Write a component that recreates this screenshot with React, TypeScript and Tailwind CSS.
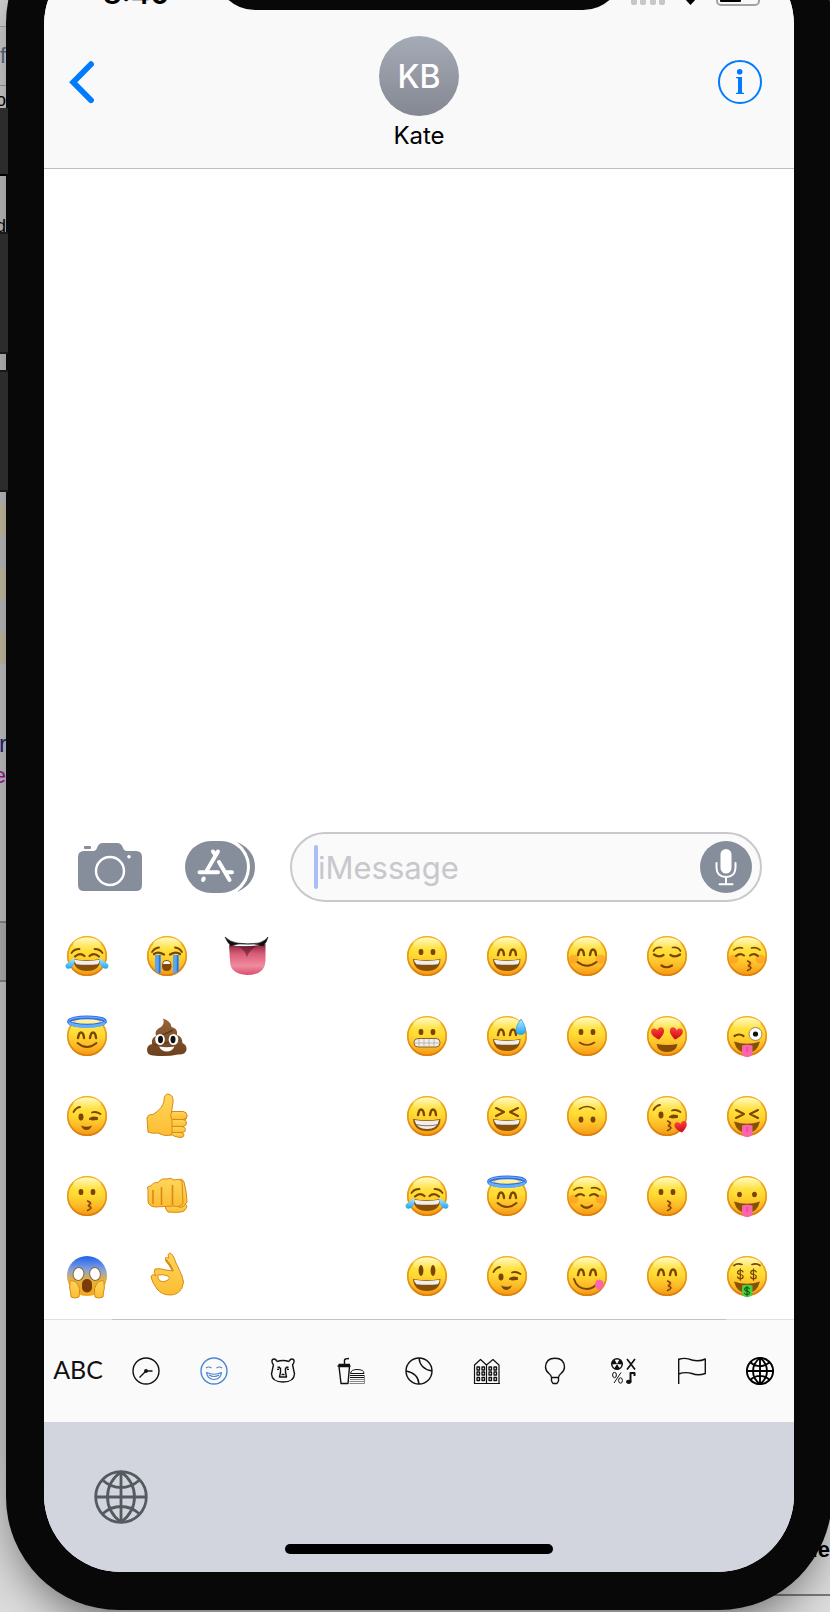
import type { ReactNode } from "react";

const BROWN = "#7a4504";

/* ---------- Emoji parts, all on a 40 x 40 grid ---------- */

function Line({ d, w = 1.9 }: { d: string; w?: number }) {
  return <path d={d} fill="none" stroke={BROWN} strokeWidth={w} strokeLinecap="round" strokeLinejoin="round" />;
}

function Ball({ fill = "url(#skin)" }: { fill?: string }) {
  return (
    <>
      <circle cx="20" cy="20" r="20" fill={fill} />
      <circle cx="20" cy="20" r="19.2" fill="none" stroke="url(#rim)" strokeWidth="1.6" />
      <ellipse cx="20" cy="8" rx="14" ry="6.5" fill="url(#shine)" />
    </>
  );
}

function OvalEyes({ y = 16, ry = 3.1, dx = 6 }: { y?: number; ry?: number; dx?: number }) {
  return (
    <>
      <ellipse cx={20 - dx} cy={y} rx="2.4" ry={ry} fill={BROWN} />
      <ellipse cx={20 + dx} cy={y} rx="2.4" ry={ry} fill={BROWN} />
    </>
  );
}

const ArchEyes = () => <Line w={2.4} d="M11 19Q12 13.5 14 13.5Q16.500 13.500 17 19M23 19Q24 13.500 26 13.500Q28.500 13.500 29 19" />;
const SquintEyes = () => <Line w={2} d="M9 12L17 16L9 20M31 12L23 16L31 20" />;
const ClosedEyes = () => <Line w={2.1} d="M9 20Q13 16.500 17 19.500M23 19.500Q27 16.500 31 20" />;
const Brows = () => <Line w={1.7} d="M7 14Q10.500 10.500 15.500 12M24.500 12Q29.500 10.500 33 14" />;
const Wink = () => (
  <>
    <Line w={1.8} d="M6.500 16Q9 11.500 13 11M25 16.500Q29 15 33.500 18" />
    <ellipse cx="14" cy="21" rx="2.5" ry="3.4" fill={BROWN} />
    <Line w={2.1} d="M23 23Q25.500 20.500 30 22M25 23.500L30 23" />
  </>
);
const Kiss = () => (
  <>
    <path d="M21 26L26 27L24 30L26 33L21 34Z" fill="#f5891c" opacity="0.6" />
    <Line w={1.5} d="M20.500 25Q25.500 26.500 22 29Q20.500 30 22 30Q26.500 32 20.500 34.500" />
  </>
);
const BigMouth = ({ grid = false }: { grid?: boolean }) => (
  <>
    <path d="M6 23Q20 25.500 33.500 23Q33 35 20 35Q7 35 6 23Z" fill="#885006" />
    <path
      d={grid ? "M7.500 24Q20 26 32 24Q30.500 33 20 33Q9.500 33 7.500 24Z" : "M7 23.800Q20 26 32.500 23.800Q32.500 27.500 30.500 28.200Q20 29.500 9.500 28.200Q7.500 27 7 23.800Z"}
      fill="#f0eff0"
    />
    {grid && <path d="M9 28.500Q20 31 31 28.500" fill="none" stroke="#977452" strokeWidth="1.2" />}
  </>
);
const Tongue = ({ fill = "#fb65ae", line = "#e43b83" }: { fill?: string; line?: string }) => (
  <>
    <path d="M7 25.500Q20 30 33 25.500Q30 37 20 37Q10 37 7 25.500Z" fill="#885006" />
    <path d="M15 29.500Q20 28 25.500 29.500V36Q25.500 41.200 20 41.200Q15 41.200 15 36Z" fill={fill} />
    <path d="M20 31V36" stroke={line} strokeWidth="1" />
  </>
);
const Cheeks = () => (
  <>
    <ellipse cx="6.500" cy="23" rx="5" ry="4.500" fill="#ff6d1d" opacity="0.35" />
    <ellipse cx="33.500" cy="23" rx="5" ry="4.500" fill="#ff6d1d" opacity="0.35" />
  </>
);
const Heart = ({ x, y, s, r = 0 }: { x: number; y: number; s: number; r?: number }) => (
  <path
    transform={`translate(${x} ${y}) rotate(${r}) scale(${s})`}
    d="M0 6C-3 4-7 0.500-6.500-3C-6-6.500-1.500-6.500 0-3C1.500-6.500 6-6.500 6.500-3C7 0.500 3 4 0 6Z"
    fill="url(#red)"
  />
);
const Dollar = ({ x, y, s = 1, color = BROWN }: { x: number; y: number; s?: number; color?: string }) => (
  <path
    transform={`translate(${x} ${y}) scale(${s})`}
    d="M2.800-2.500Q2.300-4.200 0-4.200Q-2.800-4.200-2.800-2Q-2.800-0.500 0 0Q2.800 0.500 2.800 2.200Q2.800 4.200 0 4.200Q-2.500 4.200-2.800 2.300M0-5.700V5.700"
    fill="none"
    stroke={color}
    strokeWidth="1.200"
    strokeLinecap="round"
  />
);
const Hand = ({ children }: { children: ReactNode }) => (
  <g fill="url(#hand)" stroke="#d98a14" strokeWidth="1" strokeLinejoin="round">
    {children}
  </g>
);

const EMOJI: Record<string, ReactNode> = {
  joy: (
    <>
      <Ball />
      <Line w={1.800} d="M4.500 17Q7 13 12.500 13M27.500 13Q33 13 35.500 17" />
      <Line w={2.200} d="M8 20.500Q13 16 17.500 20M22.500 20Q27 16 32 20.500" />
      <BigMouth />
      <path d="M7.500 21.500Q8.500 29 4 32Q-0.500 34-1.500 30.500C-2 27 3 26 7.500 21.500Z" fill="url(#tear)" />
      <path d="M32.500 21.500Q31.500 29 36 32Q40.500 34 41.500 30.500C42 27 37 26 32.500 21.500Z" fill="url(#tear)" />
    </>
  ),
  halo: (
    <>
      <Ball />
      <ellipse cx="20" cy="5.500" rx="18" ry="4.200" fill="none" stroke="#2e6fe9" strokeWidth="3.800" />
      <ellipse cx="20" cy="5.200" rx="18.500" ry="4.200" fill="none" stroke="#7fb4fa" strokeWidth="1" />
      <path d="M2 6.500Q5 10.500 20 10.500T38 6.500" fill="none" stroke="#5eb0ff" strokeWidth="2.600" />
      <g transform="translate(0 3)">
        <ArchEyes />
      </g>
      <Line d="M10.500 27Q20 35 29.500 27" />
    </>
  ),
  wink: (
    <>
      <Ball />
      <Wink />
      <path d="M14 29.500Q19.500 32 25 29.500Q23 34 19.500 34Q16 34 14 29.500Z" fill={BROWN} />
    </>
  ),
  kissing: (
    <>
      <Ball />
      <OvalEyes />
      <Kiss />
    </>
  ),
  scream: (
    <>
      <circle cx="20" cy="20" r="20" fill="url(#fright)" />
      <g fill="#fff" stroke="#896a32" strokeWidth="1">
        <ellipse cx="11.500" cy="18" rx="5.300" ry="6.500" transform="rotate(12 11.500 18)" />
        <ellipse cx="28" cy="18" rx="5.300" ry="6.500" transform="rotate(-12 28 18)" />
      </g>
      <rect x="15" y="23" width="10" height="13.500" rx="5" fill="#7b3b06" />
      <Hand>
        <path d="M3 28Q2 24.500 5 24.500Q9 25 11 29Q13 32 12.500 36L12 41Q8 43 4 41L3.500 36Q2 32 3 28Z" />
        <path d="M37 28Q38 24.500 35 24.500Q31 25 29 29Q27 32 27.500 36L28 41Q32 43 36 41L36.500 36Q38 32 37 28Z" />
      </Hand>
    </>
  ),
  sob: (
    <>
      <Ball />
      <Line w={1.800} d="M5 16Q7.500 12 12 11.500M28 11.500Q32.500 12 35 16" />
      <path d="M8 19H14V38Q10 36.500 8 35ZM26 19H32V35Q30 36.500 26 38Z" fill="#5ba4ee" />
      <path d="M12.500 19V37M30.500 19V36" stroke="#2b70d6" strokeWidth="1.400" />
      <Line w={2.300} d="M7 18Q11 15 17 18.500M23 18.500Q29 15 33 18" />
      <path d="M15 30Q15 24 19.500 24Q24.500 24 24.500 30Q24.500 35 19.500 35Q15 35 15 30Z" fill="#854804" />
      <path d="M16 28Q16.500 25 19.500 25Q23 25 23.500 28Z" fill="#fff" />
    </>
  ),
  poop: (
    <>
      <path
        d="M16 2.500Q24 5 24.500 11Q31 12 30 19Q35 20 35.500 27Q40 29 39.500 34Q38 39 31 38.500Q20 41 6 39.500Q0 39 0 34Q0 29 5 28Q4 22 9 20Q7 14 14 11Q18 8 16 2.500Z"
        fill="url(#brown)"
      />
      <path d="M11 21Q18 18 26 14M7 29Q20 27 33 24" fill="none" stroke="#563215" strokeWidth="1.200" />
      <ellipse cx="13" cy="23.500" rx="4.800" ry="5.600" fill="#fff" />
      <ellipse cx="26.500" cy="23.500" rx="4.800" ry="5.600" fill="#fff" />
      <ellipse cx="13.500" cy="23.500" rx="2.500" ry="3.700" fill="#111" />
      <ellipse cx="26" cy="23.500" rx="2.500" ry="3.700" fill="#111" />
      <path d="M12 30.500Q20 32 27.500 30.500Q25 35.500 20 35.500Q14.500 35.500 12 30.500Z" fill="#fff" />
    </>
  ),
  thumb: (
    <Hand>
      <path d="M0 22Q1 18 6 18.500Q16 12 17 5Q17-2 21-2Q27-1 26 7Q25 12 24.500 16H35Q40 17 40 20Q40 24 36 24.500L25 39Q17 41 11 37Q5 38 1 36Z" />
      <path d="M25 15.500H36Q40 16 40 19.500Q40 23 36 23.500H25Q22 20 25 15.500Z" />
      <path d="M25 23.500H36Q39.500 24 39.500 27Q39.500 30 36 30.500H25Z" />
      <path d="M25 30.500H35Q38.500 31 38.500 33.500Q38.500 36.500 35 36.500H25Z" />
      <path d="M25 36.500H34Q37 37 37 39Q37 41.500 33 41.500Q27 41 24 38Z" />
    </Hand>
  ),
  fist: (
    <Hand>
      <path d="M18 28H38Q42 30 37 35Q34 37 21 36Q18 34 18 28Z" />
      <path d="M30 5Q35 1 37 6Q40 17 40 26Q36 34 30 30Z" />
      <path d="M1 14Q-1 10 4 10Q6 6 11 6.500Q14 2 20 3Q24 1 27 4Q32 2 35 5L36 27Q33 32 27 30L8 31Q1 30 1 25Z" />
      <path d="M6 14V28M14.500 11V29M25.500 9V29" fill="none" strokeWidth="1.600" />
    </Hand>
  ),
  ok: (
    <Hand>
      <path
        fillRule="evenodd"
        d="M22 2Q20-2 23-3Q26-2 29 7Q33 15 35 20Q38 26 35 32Q31 39 23 39Q15 39 10 33Q5 26 4 21Q5 17 9 20Q6 17 8 13Q13 12 19 14L26 15Q23 9 19 5Q17 0 21 2ZM11 19Q16 18 21 20Q24 22 21 24Q17 27 13 25Q10 22 11 19Z"
      />
      <path d="M19 4Q24 10 26 15" fill="none" strokeWidth="2" />
    </Hand>
  ),
  lips: (
    <>
      <path d="M2 9Q20 12 38.500 8L38.500 25Q38 39 20 39Q3 38 3 25Z" fill="url(#tongue)" />
      <path d="M10 10Q18 13 20 21Q23 13 31 10Z" fill="#3d0916" opacity="0.450" />
      <path d="M-2 1Q3 6 10 7Q21 9 32 7Q38 5 41 1Q40 6 36 10Q27 7 20 8Q11 7 4 10Q0 6-2 1Z" fill="#111" stroke="#111" strokeWidth="0.600" />
    </>
  ),
  grinning: (<><Ball /><OvalEyes /><BigMouth /></>),
  grimace: (
    <>
      <Ball />
      <OvalEyes />
      <rect x="7" y="22.500" width="26" height="8.500" rx="4" fill="#efefef" stroke="#8c651f" />
      <path d="M8 27H32M12 23V31M17 23V31M22 23V31M27 23V31" stroke="#b4aca0" strokeWidth="0.800" />
    </>
  ),
  beam: (<><Ball /><ArchEyes /><BigMouth grid /></>),
  smiley: (<><Ball /><OvalEyes y={14.500} ry={5.400} /><BigMouth /></>),
  smile: (<><Ball /><ArchEyes /><BigMouth /></>),
  sweat: (
    <>
      <Ball />
      <ArchEyes />
      <BigMouth />
      <path d="M34 3Q38.500 10 38.500 14Q38 18.500 34 18.500Q29 18.500 29 14Q29 10 34 3Z" fill="url(#tear)" stroke="#1c9be8" strokeWidth="0.700" />
    </>
  ),
  laughing: (<><Ball /><SquintEyes /><BigMouth /></>),
  blush: (<><Ball /><Cheeks /><ArchEyes /><Line d="M10.500 26Q20 33.500 29.500 26" /></>),
  slight: (<><Ball /><OvalEyes /><Line w={1.600} d="M12.500 26.500Q20 31.500 27.500 26.500" /></>),
  upside: (
    <>
      <Ball />
      <OvalEyes y={23.500} />
      <Line w={1.600} d="M12.500 13Q20 8 27.500 13" />
    </>
  ),
  relaxed: (
    <>
      <Ball />
      <Cheeks />
      <Brows />
      <ClosedEyes />
      <Line d="M14.500 29.500Q19.500 34 25 29.500" w={2.200} />
    </>
  ),
  yum: (
    <>
      <Ball />
      <ArchEyes />
      <Line d="M7 23Q10 33 20 33Q27 33 31 26" />
      <path d="M29 25Q32 22 35.500 25Q38 28 35.500 32Q32 35 29 32Q27 30 29 25Z" fill="#fb65ae" />
    </>
  ),
  relieved: (
    <>
      <Ball />
      <Line w={1.700} d="M6.500 15Q9 10.500 14.500 11.500M25.500 11.500Q31 10.500 33.500 15" />
      <Line w={2.300} d="M7 18.500Q11.500 22 16.500 19M23.500 19Q28.500 22 33 18.500" />
      <Line w={2.200} d="M14.500 29.500Q19.500 33 25 29.500" />
    </>
  ),
  hearts: (
    <>
      <Ball />
      <Heart x={11} y={17.500} s={1} r={-10} />
      <Heart x={29} y={17.500} s={1} r={10} />
      <path d="M9.500 28Q20 30 30.500 28Q29 36 20 36Q11 36 9.500 28Z" fill="#854b07" />
    </>
  ),
  kissheart: (
    <>
      <Ball />
      <g transform="translate(0 -2)">
        <Wink />
      </g>
      <Kiss />
      <Heart x={34} y={31} s={0.950} r={-10} />
    </>
  ),
  kisssmile: (<><Ball /><ArchEyes /><Kiss /></>),
  kissclosed: (<><Ball /><Cheeks /><Brows /><ClosedEyes /><Kiss /></>),
  winktongue: (
    <>
      <Ball />
      <Line w={2.200} d="M7.500 20Q12 17 16.500 20" />
      <circle cx="28.500" cy="18" r="6.500" fill="#fff" stroke="#9b8650" />
      <circle cx="28.500" cy="18" r="2.600" fill="#111" />
      <Tongue />
    </>
  ),
  squinttongue: (<><Ball /><g transform="translate(0 2)"><SquintEyes /></g><Tongue /></>),
  tongueout: (<><Ball /><OvalEyes y={18.500} ry={2.800} dx={7.500} /><Tongue /></>),
  money: (
    <>
      <Ball />
      <Line w={1.700} d="M7 9.500Q10 7 15 8.500M25 8.500Q30 7 33 9.500" />
      <Tongue fill="#48d23c" line="#14791c" />
      <Dollar x={13.300} y={18.500} />
      <Dollar x={26.500} y={18.500} />
      <Dollar x={20} y={35} s={0.850} color="#114f14" />
    </>
  ),
};

const RECENTS = [
  "joy", "halo", "wink", "kissing", "scream",
  "sob", "poop", "thumb", "fist", "ok",
  "lips",
];

const SMILEYS = [
  "grinning", "grimace", "beam", "joy", "smiley",
  "smile", "sweat", "laughing", "halo", "wink",
  "blush", "slight", "upside", "relaxed", "yum",
  "relieved", "hearts", "kissheart", "kissing", "kisssmile",
  "kissclosed", "winktongue", "squinttongue", "tongueout", "money",
];

function EmojiGroup({ names, label }: { names: string[]; label: string }) {
  return (
    <div aria-label={label} className="grid grid-flow-col grid-rows-5 auto-cols-[80px] auto-rows-[80px]">
      {names.map((name) => (
        <button key={name} type="button" aria-label={name} className="flex h-20 items-center justify-center">
          <svg viewBox="0 0 40 40" className="size-10 overflow-visible">
            {EMOJI[name]}
          </svg>
        </button>
      ))}
    </div>
  );
}

function Paints() {
  return (
    <svg className="absolute size-0" aria-hidden="true">
      <defs>
        <linearGradient id="skin" x1="0" y1="0" x2="0" y2="1">
          <stop offset="0" stopColor="#ffe95c" />
          <stop offset="0.450" stopColor="#ffdc33" />
          <stop offset="0.750" stopColor="#fdb925" />
          <stop offset="1" stopColor="#f09414" />
        </linearGradient>
        <linearGradient id="rim" x1="0" y1="0" x2="0" y2="1">
          <stop offset="0" stopColor="#f3ac26" />
          <stop offset="1" stopColor="#dc7d0d" />
        </linearGradient>
        <linearGradient id="shine" x1="0" y1="0" x2="0" y2="1">
          <stop offset="0" stopColor="#fffbd0" stopOpacity="0.950" />
          <stop offset="1" stopColor="#fff38a" stopOpacity="0" />
        </linearGradient>
        <linearGradient id="fright" x1="0" y1="0" x2="0" y2="1">
          <stop offset="0" stopColor="#1c63ee" />
          <stop offset="0.350" stopColor="#86a1e0" />
          <stop offset="0.600" stopColor="#e5b13c" />
          <stop offset="1" stopColor="#f5a91c" />
        </linearGradient>
        <linearGradient id="tear" x1="0" y1="0" x2="0" y2="1">
          <stop offset="0" stopColor="#b9ecff" />
          <stop offset="1" stopColor="#1ba4f2" />
        </linearGradient>
        <linearGradient id="red" x1="0" y1="0" x2="0" y2="1">
          <stop offset="0" stopColor="#f8433f" />
          <stop offset="1" stopColor="#cf0711" />
        </linearGradient>
        <linearGradient id="brown" x1="0" y1="0" x2="0" y2="1">
          <stop offset="0" stopColor="#96663b" />
          <stop offset="1" stopColor="#6b401d" />
        </linearGradient>
        <linearGradient id="hand" x1="0" y1="0" x2="0" y2="1">
          <stop offset="0" stopColor="#ffd65c" />
          <stop offset="1" stopColor="#fbbd33" />
        </linearGradient>
        <linearGradient id="tongue" x1="0" y1="0" x2="0" y2="1">
          <stop offset="0" stopColor="#7d2338" />
          <stop offset="0.300" stopColor="#d75a75" />
          <stop offset="0.700" stopColor="#f08ba0" />
          <stop offset="1" stopColor="#d8506c" />
        </linearGradient>
      </defs>
    </svg>
  );
}

/* ---------- Category icons, on a 28 x 28 grid ---------- */

const CATEGORIES: { name: string; tone: string; art: ReactNode }[] = [
  {
    name: "Recent",
    tone: "text-[#111111]",
    art: (<><circle cx="14" cy="14" r="13" /><path d="M20.500 14H14L7.500 20.500" /><circle cx="14" cy="14" r="1.200" fill="currentColor" /></>),
  },
  {
    name: "Smileys",
    tone: "text-[#4b86d2]",
    art: (<><circle cx="14" cy="14" r="13" /><path d="M6 11Q8.500 9 11.500 11M16.500 11Q19.500 9 22 11M6.500 15.500Q14 19 21.500 15.500Q20.500 22.500 14 22.500Q7.500 22.500 6.500 15.500ZM9 18Q14 21 19 18" strokeWidth="1.200" /></>),
  },
  {
    name: "Animals",
    tone: "text-[#111111]",
    art: (
      <>
        <path d="M8 4.500Q14 2.500 20 4.500M8 4.500Q6.500 1 3.500 2.500Q2 4.500 4.500 8M20 4.500Q21.500 1 24.500 2.500Q26 4.500 23.500 8M4.500 7.500L2.500 17Q3 25 14 25Q25 25 25.500 17L23.500 7.500" />
        <path d="M11.500 10.500V15L10.500 20H17.500L16.500 15V10.500M12.500 17.500H15.500" />
        <path strokeWidth="2" d="M8.500 10.500H11M17 10.500H19.500M9 12V13M19 12V13" />
      </>
    ),
  },
  {
    name: "Food",
    tone: "text-[#111111]",
    art: (<><path d="M2 9.500H12.500L11 26.500H4ZM0.500 9H13.500M1.500 7.500H13M7.500 7V3Q8 1.500 12 1.500" /><g strokeWidth="1"><path d="M13.500 16.500Q14 12.500 20 12.500Q27 12.500 27 16.500ZM13 18.500H27.500M13 20.500H27.500" /><path stroke="#888888" d="M13 22.500H27.500M12.500 24.500H27.500M12.500 26.500H27.500M27.500 18V26.500" /></g></>),
  },
  {
    name: "Sports",
    tone: "text-[#111111]",
    art: (<><circle cx="14" cy="14" r="13" /><path d="M14 1Q15 12 27 14M1 14Q13 16 14 27" /></>),
  },
  {
    name: "Places",
    tone: "text-[#111111]",
    art: (
      <>
        <path strokeWidth="1.200" d="M1.500 26.500V8L7.500 2.500L13.500 8V26.500ZM13.500 26.500V8L20 2.500L26 8V26.500ZM1 26.500H27" />
        <path strokeWidth="1.300" d="M4 10H6.500V13H4ZM9 10H11.500V13H9ZM4 15H6.500V18H4ZM9 15H11.500V18H9ZM4 20.500H6.500V23.500H4ZM9 20.500H11.500V23.500H9ZM16 10H18.500V13H16ZM21 10H23.500V13H21ZM16 15H18.500V18H16ZM21 15H23.500V18H21ZM16 20.500H18.500V23.500H16ZM21 20.500H23.500V23.500H21Z" />
      </>
    ),
  },
  {
    name: "Objects",
    tone: "text-[#111111]",
    art: (<path d="M10.500 20.500Q10.500 18.500 8 16.500Q4.500 13.500 4.500 10Q5 1.200 14 1.200Q23 1.200 23.500 10Q23.500 13.500 20 16.500Q17.500 18.500 17.500 20.500ZM10.500 20.500V24L12 26.500H16L17.500 24V20.500" />),
  },
  {
    name: "Symbols",
    tone: "text-[#111111]",
    art: (
      <>
        <circle cx="7" cy="7" r="5.300" />
        <path fill="currentColor" stroke="none" d="M7 7L1.500 7.500Q1.500 4 4.500 2.500ZM7 7L9.500 2.500Q12.500 4 12.500 7.500ZM7 7L10 12Q7 13.500 4 12Z" />
        <path strokeWidth="1.700" d="M17 2L25 12.500M25 2L17 12.500" />
        <path strokeWidth="1" d="M11 15.500L4 26" />
        <ellipse cx="4.500" cy="18" rx="1.900" ry="2.700" strokeWidth="1" />
        <ellipse cx="10.500" cy="23.500" rx="1.900" ry="2.700" strokeWidth="1" />
        <path strokeWidth="2" d="M20.500 25V16H24.500V19" />
        <ellipse cx="18.800" cy="24.800" rx="2.700" ry="2.100" fill="currentColor" stroke="none" />
      </>
    ),
  },
  {
    name: "Flags",
    tone: "text-[#111111]",
    art: (<path d="M0.700 27V1.500M0.700 2.500Q7 0 14 3Q21 5 27.300 2V16.500Q20 19 14 16.500Q7 14.500 0.700 17" />),
  },
];

function Globe({ size, stroke }: { size: string; stroke: string }) {
  return (
    <svg viewBox="0 0 54 54" className={size} fill="none" stroke="currentColor" strokeWidth={stroke} aria-hidden="true">
      <circle cx="27" cy="27" r="25.300" />
      <path d="M1.700 27H52.300M27 1.700V52.300M27 1.700Q13.500 12 13.500 27T27 52.300M27 1.700Q40.500 12 40.500 27T27 52.300M9 10.500Q17 17.500 27 17.500T45 10.500M9 43.500Q17 36.500 27 36.500T45 43.500" />
    </svg>
  );
}

/* ---------- Desktop behind the phone ---------- */

function Backdrop() {
  return (
    <div aria-hidden="true" className="absolute inset-0 flex justify-between overflow-hidden bg-linear-to-b from-[#c8c8c8] from-90% to-[#dedede] font-['Liberation_Sans'] text-lg">
      <div className="w-2 overflow-hidden">
        <div className="h-[27px] border-b border-[#a5a5a5] bg-[#d2d2d2]" />
        <div className="flex h-[59px] items-center justify-end border-b border-[#999999] bg-[#cccccc] pr-0.5 text-[22px] text-[#596780]">f</div>
        <div className="flex h-[22px] items-end justify-end bg-[#cccccc] pr-0.5 leading-4 text-black">o</div>
        <div className="h-[68px] border-b-2 border-black bg-[#2c2c2c]" />
        <div className="flex h-14 items-end justify-end bg-[#bebebe] pr-0.5 leading-3 text-black">d</div>
        <div className="h-[122px] border-y-2 border-[#151515] bg-[#2c2c2c]" />
        <div className="h-4 bg-[#b9b9b9]" />
        <div className="h-[122px] border-y-2 border-[#151515] bg-[#2c2c2c]" />
        <div className="h-3 bg-[#bebebe]" />
        <div className="h-8 bg-[#c6bea3]" />
        <div className="h-8 bg-[#bebec1]" />
        <div className="h-8 bg-[#c6c0a5]" />
        <div className="h-8 bg-[#bebec1]" />
        <div className="h-8 bg-[#c6bea3]" />
        <div className="flex h-[96px] items-end justify-end bg-[#c3c3c3] pr-px text-2xl leading-8 text-[#252275]">r</div>
        <div className="flex h-8 items-center justify-end bg-[#c3c3c3] pr-0.5 text-[22px] text-[#9b1692]">e</div>
        <div className="h-[131px] border-b-2 border-[#858585] bg-[#c3c3c3]" />
        <div className="h-[59px] border-b-2 border-[#858585] bg-[#b0b0b0]" />
      </div>
      <div className="flex w-16 flex-col justify-end bg-[#dedede]">
        <div className="pb-8 text-right text-[22px] font-bold leading-6 text-black">de</div>
        <div className="h-[18px] border-t-2 border-[#777c80]" />
      </div>
    </div>
  );
}

export default function App() {
  return (
    <div className="relative min-h-screen overflow-hidden bg-[#d8d8d8] font-[Inter,sans-serif] text-black">
      <Backdrop />
      <Paints />
      <div className="relative -mr-0.5 -mt-[90px] mb-0.5 ml-1.5 flex min-h-[calc(100vh+88px)] flex-col rounded-[113px] bg-[#080808] p-[38px] shadow-[0_24px_50px_-16px_rgba(0,0,0,0.6)]">
        <main className="flex flex-1 flex-col overflow-hidden rounded-[77px] bg-white">
          <header className="border-b border-[#bfbfc2] bg-[#f9f9f9]">
            <div className="relative flex h-[62px] items-end justify-between pb-1 pl-[59px] pr-[34px]">
              <span className="text-[29px] font-semibold leading-6">8:40</span>
              <div className="absolute inset-x-0 bottom-0 mx-auto h-[62px] w-[408px] rounded-b-[40px] bg-[#080808]" />
              <svg viewBox="0 0 130 26" className="h-[26px] w-[130px]" aria-label="Signal, Wi-Fi and battery">
                <g fill="#c7c7c9">
                  <rect x="1" y="18" width="6" height="7" rx="2" />
                  <rect x="10" y="18" width="6" height="7" rx="2" />
                  <rect x="20" y="18" width="6" height="7" rx="2" />
                  <rect x="29" y="18" width="6" height="7" rx="2" />
                </g>
                <path d="M60.500 25L54 18Q60.500 13 67 18Z" />
                <rect x="87" y="5" width="42" height="20" rx="4" fill="none" stroke="#a2a2a4" strokeWidth="2" />
                <rect x="90" y="8" width="21" height="14" rx="1" />
              </svg>
            </div>
            <div className="grid grid-cols-3 items-start px-6 pb-4 pt-[26px]">
              <button type="button" aria-label="Back" className="mt-6 h-11 w-7 text-[#007aff]">
                <svg viewBox="0 0 28 44" fill="none" stroke="currentColor" strokeWidth="5.800" strokeLinecap="round" strokeLinejoin="miter">
                  <path d="M23 4.200L5.200 22.200L23 40.200" />
                </svg>
              </button>
              <div className="flex flex-col items-center gap-1">
                <div className="flex size-20 items-center justify-center rounded-full bg-linear-to-b from-[#a5abb7] to-[#848892] pt-0.5 text-[32px] font-medium text-white">
                  KB
                </div>
                <h1 className="text-2xl leading-8">Kate</h1>
              </div>
              <button type="button" aria-label="Details" className="mr-2 mt-6 size-11 justify-self-end text-[#007aff]">
                <svg viewBox="0 0 44 44" fill="currentColor">
                  <circle cx="22" cy="22" r="21" fill="none" stroke="currentColor" strokeWidth="2" />
                  <circle cx="21.700" cy="11.700" r="2.800" />
                  <path d="M18 17H24V32.500L26 33V34H18V33L20 32.500V18.500L18 18Z" />
                </svg>
              </button>
            </div>
          </header>

          <section aria-label="Conversation" className="flex-1" />

          <form className="flex items-center pb-3.5 pl-[34px] pr-8" onSubmit={(e) => e.preventDefault()}>
            <button type="button" aria-label="Camera" className="h-12 w-16 shrink-0 text-[#868e9b]">
              <svg viewBox="0 0 64 48" fill="currentColor">
                <rect x="6" y="3" width="7" height="3" rx="1" />
                <path d="M6 8H15Q18 8 19 5Q20.500 0 25 0H39Q43.500 0 45 5Q46 8 49 8H58Q64 8 64 14V42Q64 48 58 48H6Q0 48 0 42V14Q0 8 6 8Z" />
                <circle cx="32" cy="28" r="14" fill="none" stroke="#fff" strokeWidth="2.400" />
                <circle cx="51" cy="13.700" r="1.800" fill="#fff" />
              </svg>
            </button>
            <button type="button" aria-label="Apps" className="ml-[43px] h-[52px] w-[70px] shrink-0 text-[#868e9b]">
              <svg viewBox="0 0 70 52" fill="currentColor">
                <path d="M52 1Q70 9 70 26T52 51Q65 41 65 26T52 1Z" />
                <rect width="62" height="52" rx="26" />
                <g stroke="#fff" strokeWidth="4" strokeLinecap="round">
                  <path d="M33 10.500L21.500 30M28 10.500L30.500 14M34 21L44.500 39M14.500 31.200H33M41 31.200H47M18.800 37.500L18 39" />
                </g>
              </svg>
            </button>
            <div className="ml-[35px] flex h-[70px] min-w-0 flex-1 items-center rounded-full border-2 border-[#c8c8cd] bg-[#fafafa] pl-[22px] pr-2">
              <span className="h-11 w-1 shrink-0 rounded-full bg-[#a9bdf6]" />
              <input
                type="text"
                aria-label="Message"
                placeholder="iMessage"
                className="min-w-0 flex-1 bg-transparent pt-0.5 text-[31px] leading-10 outline-none placeholder:text-[#c7c7cc]"
              />
              <button type="button" aria-label="Record audio" className="size-[52px] shrink-0">
                <svg viewBox="0 0 52 52" fill="none" stroke="#fff" strokeWidth="2" strokeLinecap="round">
                  <circle cx="26" cy="26" r="26" fill="#868e9b" stroke="none" />
                  <rect x="20.500" y="8" width="11" height="24.500" rx="5.500" fill="#fff" stroke="none" />
                  <path d="M16.500 22V27Q17 36 26 36T35.500 27V22M26 36V43M19.500 43.200H32.500" />
                </svg>
              </button>
            </div>
          </form>

          <section aria-label="Emoji" className="flex justify-between pb-[3px] pl-[3px] pr-[7px]">
            <EmojiGroup names={RECENTS} label="Frequently used" />
            <EmojiGroup names={SMILEYS} label="Smileys and people" />
          </section>

          <div className="flex h-px bg-[#e1e1e3]">
            <div className="mx-[68px] flex-1 bg-[#c3c3c6]" />
          </div>
          <nav aria-label="Emoji categories" className="grid h-[102px] grid-cols-11 items-center justify-items-center bg-[#fafafa]">
            <button type="button" className="pb-1 font-[Lato,sans-serif] text-[25px] leading-8 text-[#111111]">ABC</button>
            {CATEGORIES.map((c) => (
              <button key={c.name} type="button" aria-label={c.name} className={c.tone}>
                <svg viewBox="0 0 28 28" className="size-7" fill="none" stroke="currentColor" strokeWidth="1.400" strokeLinejoin="round">
                  {c.art}
                </svg>
              </button>
            ))}
            <button type="button" aria-label="All keyboards" className="text-black">
              <Globe size="size-7" stroke="3.600" />
            </button>
          </nav>

          <footer className="flex h-[150px] flex-col justify-between bg-[#d2d5dd] pb-[18px] pt-12">
            <button type="button" aria-label="Next keyboard" className="ml-[50px] size-[54px] text-[#555a60]">
              <Globe size="size-[54px]" stroke="2.800" />
            </button>
            <div className="h-2.5 w-[268px] self-center rounded-full bg-black" />
          </footer>
        </main>
      </div>
      <div aria-hidden="true" className="absolute left-0 top-[108px] h-[66px] w-2 bg-[#2c2c2c]" />
      <div aria-hidden="true" className="absolute left-0 top-[232px] h-[122px] w-2 border-y-2 border-[#191919] bg-[#2c2c2c]" />
      <div aria-hidden="true" className="absolute left-0 top-[370px] h-[122px] w-2 border-y-2 border-[#191919] bg-[#2c2c2c]" />
    </div>
  );
}
